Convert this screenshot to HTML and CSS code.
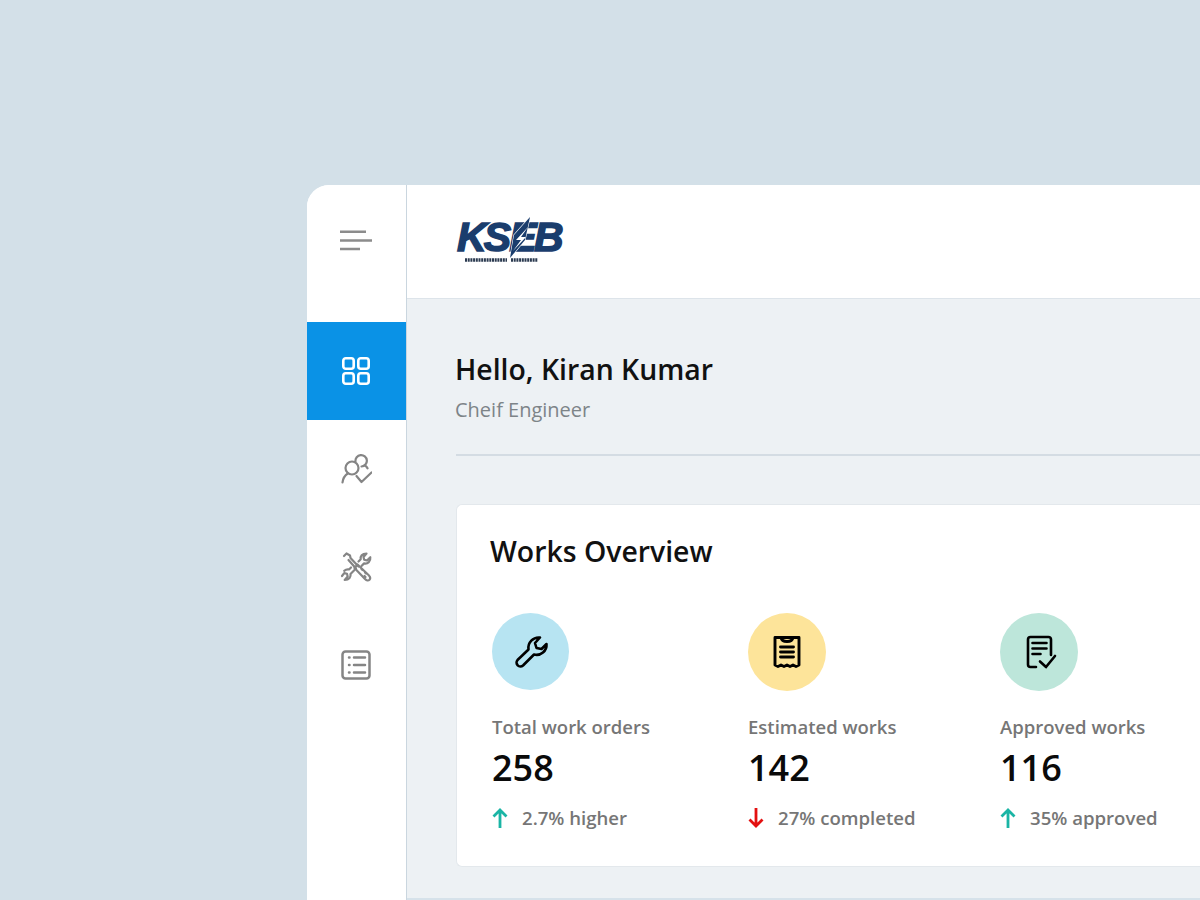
FILE: index.html
```html
<!DOCTYPE html>
<html lang="en">
<head>
<meta charset="utf-8">
<title>KSEB Dashboard</title>
<link rel="stylesheet" href="styles.css">
</head>
<body>
<div class="shell">
  <aside class="sidebar">
    <div class="menu-slot">
      <svg class="menu-icon" viewBox="0 0 32 21" width="32" height="21"><path d="M0 1.700h26M0 10.500h32M0 19h20"/></svg>
    </div>
    <nav class="nav">
      <a class="nav-item active">
        <svg viewBox="0 0 28 28" width="28" height="28" class="nav-icon"><rect x="1.300" y="1.300" width="10.400" height="10.400" rx="2.500"/><rect x="16.300" y="1.300" width="10.400" height="10.400" rx="2.500"/><rect x="1.300" y="16.300" width="10.400" height="10.400" rx="2.500"/><rect x="16.300" y="16.300" width="10.400" height="10.400" rx="2.500"/></svg>
      </a>
      <a class="nav-item">
        <svg viewBox="0 0 32 32" width="32" height="32" class="nav-icon thin"><circle cx="12" cy="15" r="6.500"/><path d="M15.500 8.500A5.700 5.700 0 1 1 21.500 13.500M25 12.500c1.200.8 2 1.700 2.500 2.800M2.500 29.500c.4-3.800 2.300-7 5.200-9M16.500 23l5 6L31.500 19.500"/></svg>
      </a>
      <a class="nav-item">
        <svg viewBox="0 0 32 32" width="32" height="32" class="nav-icon thin"><g transform="translate(1.500 0)"><path d="M2.500 5L5 2.500l3.500 2 .5 2.500 8 8.500M7 9l7.500 8.500"/><path d="M16 13.500l11 10.500c2 2 2.300 3.300 1 4.700-1.300 1.300-2.800 1-4.500-.8L13 17z"/><path d="M20 18l1 1M23.500 21.500l1 1M23 25l1 1"/><path d="M17 10.500l2.200-2.200c-.6-3 1.300-5.800 5.800-5.800l-3 3.500.7 2.700 2.800.8 3.300-3.300c.5 4.300-2.500 7-6.200 6.200L20 15M13 19L9 23c.6 3-1.300 6-5.800 6l3-3.500-.7-2.700-2.800-.7L.5 25M9.500 16.500l-2 2c-2-.3-3.500.2-4.800 1.300"/></g></svg>
      </a>
      <a class="nav-item">
        <svg viewBox="0 0 30 30" width="30" height="30" class="nav-icon thin list"><rect x="1.500" y="1.500" width="27" height="27" rx="3"/><path d="M13 7.500h11M13 15h11M13 22.500h11M8 7.500h.5M8 15h.5M8 22.500h.5"/></svg>
      </a>
    </nav>
  </aside>
  <div class="content">
    <header class="topbar">
      <div class="logo">
        <div class="logo-mark">
          <span class="logo-word">KS</span><span class="logo-word second">EB</span>
          <svg class="logo-bolt" viewBox="0 0 26 44" width="26" height="44"><path class="bolt-band" d="M23 1L7 19 3 42l15-18z"/><path class="bolt-core" d="M21 11L9 24h5L6 35l13-14h-5z"/></svg>
        </div>
        <svg class="logo-tag" viewBox="0 0 74 6" width="74" height="6"><path d="M0 3h42M46 3h27"/></svg>
      </div>
    </header>
    <main class="main">
      <section class="greeting">
        <h1 class="hello">Hello, Kiran Kumar</h1>
        <p class="role">Cheif Engineer</p>
      </section>
      <section class="card">
        <h2 class="card-title">Works Overview</h2>
        <div class="stats">
          <article class="stat stat-a">
            <div class="badge badge-blue">
              <svg viewBox="0 0 36 36" width="36" height="36" class="badge-icon"><path d="M27 3.500A10.500 10.500 0 0 0 15.500 15.500L4.500 26a3.900 3.900 0 0 0 5.500 5.500L21 20.500A10 10 0 0 0 33.500 10L28.500 15l-5-1-1.500-5z"/></svg>
            </div>
            <h3 class="stat-label">Total work orders</h3>
            <div class="stat-value">258</div>
            <div class="stat-delta">
              <svg viewBox="0 0 16 20" width="16" height="20" class="arrow up"><path d="M8 20V2M1.500 8.500L8 2l6.500 6.500"/></svg>
              <span>2.7% higher</span>
            </div>
          </article>
          <article class="stat stat-b">
            <div class="badge badge-yellow">
              <svg viewBox="0 0 36 36" width="36" height="36" class="badge-icon receipt"><path d="M6 3.500h24v27.500l-3 1.500-3-1.500-3 1.500-3-1.500-3 1.500-3-1.500-3 1.500-3-1.500z"/><path d="M12 3.500c.5 3 2.500 4 6 4s5.500-1 6-4M11.500 13h13M11.500 18h13M11.500 23h13"/></svg>
            </div>
            <h3 class="stat-label">Estimated works</h3>
            <div class="stat-value">142</div>
            <div class="stat-delta">
              <svg viewBox="0 0 16 20" width="16" height="20" class="arrow down"><path d="M8 0v18M1.500 11.500L8 18l6.500-6.500"/></svg>
              <span>27% completed</span>
            </div>
          </article>
          <article class="stat stat-c">
            <div class="badge badge-green">
              <svg viewBox="0 0 36 36" width="36" height="36" class="badge-icon"><path d="M30 21V5.500C30 4 29 3 27.500 3h-18C8 3 7 4 7 5.500v25C7 32 8 33 9.500 33H15"/><path d="M11.500 9h14M11.500 14.500h14M11.500 20h8M19 27.500l6 5.500 9-11"/></svg>
            </div>
            <h3 class="stat-label">Approved works</h3>
            <div class="stat-value">116</div>
            <div class="stat-delta">
              <svg viewBox="0 0 16 20" width="16" height="20" class="arrow up"><path d="M8 20V2M1.500 8.500L8 2l6.500 6.500"/></svg>
              <span>35% approved</span>
            </div>
          </article>
        </div>
      </section>
    </main>
  </div>
</div>
</body>
</html>
```

FILE: styles.css
```css
* { box-sizing: border-box; }
html, body { margin: 0; height: 100%; }
body {
  width: 1200px;
  height: 900px;
  overflow: hidden;
  background: #d3e0e8;
  padding: 185px 0 0 307px;
  font-family: "Open Sans", "Liberation Sans", sans-serif;
}
.shell {
  display: flex;
  width: 893px;
  height: 715px;
  background: #fff;
  border-top-left-radius: 22px;
  overflow: hidden;
}
.sidebar {
  flex: 0 0 100px;
  background: #fff;
  border-right: 1px solid #cad6df;
}
.menu-slot {
  height: 137px;
  padding: 45px 0 0 33px;
}
.menu-icon { display: block; fill: none; stroke: #8c8c8c; stroke-width: 2.600; }
.nav { display: flex; flex-direction: column; }
.nav-item {
  height: 98px;
  display: flex;
  align-items: center;
  justify-content: center;
  padding-right: 1px;
}
.nav-item.active { background: #0a92e6; }
.nav-icon { fill: none; stroke: #fff; stroke-width: 2.600; }
.nav-icon.thin { stroke: #858585; stroke-width: 2.200; stroke-linecap: round; stroke-linejoin: round; }
.nav-icon.list { stroke-width: 2.500; }
.content { flex: 1; display: flex; flex-direction: column; min-width: 0; }
.topbar {
  height: 114px;
  flex: none;
  background: #fff;
  border-bottom: 1px solid #dde4ea;
  padding: 34px 0 0 50px;
}
.logo { width: 108px; }
.logo-mark {
  position: relative;
  display: flex;
  align-items: center;
  height: 36px;
  color: #1a3d6d;
}
.logo-word {
  font-family: "Liberation Sans", Arial, sans-serif;
  font-weight: 700;
  font-style: italic;
  font-size: 41px;
  line-height: 36px;
  letter-spacing: -2.800px;
  -webkit-text-stroke: 1.500px #1a3d6d;
}
.logo-word.second { margin-left: 1px; }
.logo-bolt { position: absolute; left: 50px; top: -3px; }
.bolt-band { fill: #1a3d6d; stroke: #fff; stroke-width: 1.200; paint-order: stroke; }
.bolt-core { fill: #fff; }
.logo-tag { display: block; margin: 2px 0 0 8px; fill: none; stroke: #2b3a50; stroke-width: 3.500; stroke-dasharray: 2 .7; }
.main {
  flex: 1;
  background: #edf1f4;
  padding: 48px 0 0 49px;
  border-bottom: 2px solid #d6e2ea;
}
.greeting {
  height: 109px;
  border-bottom: 2px solid #d4dce3;
}
.hello {
  margin: 0 0 0 -1px;
  font-size: 28.400px;
  line-height: 44px;
  font-weight: 600;
  color: #111;
}
.role {
  margin: 3px 0 0 -1px;
  font-size: 20px;
  line-height: 32px;
  color: #7d8488;
}
.card {
  margin-top: 48px;
  height: 363px;
  background: #fff;
  border: 1px solid #e3e8ec;
  border-right: 0;
  border-radius: 6px 0 0 6px;
  padding: 25px 0 0 33px;
}
.card-title {
  margin: 0;
  font-size: 28.400px;
  line-height: 42px;
  font-weight: 600;
  color: #111;
}
.stats { display: flex; margin-top: 41px; padding-left: 2px; }
.stat { flex: none; }
.stat-a { width: 256px; }
.stat-b { width: 252px; }
.stat-c { width: 200px; }
.badge {
  width: 78px;
  height: 78px;
  border-radius: 50%;
  display: flex;
  align-items: center;
  justify-content: center;
}
.badge-blue { background: #b7e4f2; width: 77px; height: 77px; }
.badge-yellow { background: #fde49a; }
.badge-green { background: #bde6da; }
.badge-icon { fill: none; stroke: #000; stroke-width: 2.600; stroke-linejoin: round; stroke-linecap: round; }
.badge-icon.receipt { stroke-width: 2.900; }
.stat-label {
  margin: 22px 0 0;
  font-size: 18.500px;
  line-height: 28px;
  font-weight: 600;
  color: #767676;
}
.stat-a .stat-label { margin-top: 23px; }
.stat-value {
  margin-top: 3px;
  font-size: 36px;
  line-height: 48px;
  font-weight: 600;
  color: #0a0a0a;
}
.stat-delta {
  margin-top: 12px;
  display: flex;
  align-items: center;
  gap: 14px;
  font-size: 18.600px;
  line-height: 28px;
  font-weight: 600;
  color: #767676;
}
.arrow { fill: none; stroke-width: 2.800; flex: none; }
.arrow.up { stroke: #1ab5a5; }
.arrow.down { stroke: #e31010; }
```
